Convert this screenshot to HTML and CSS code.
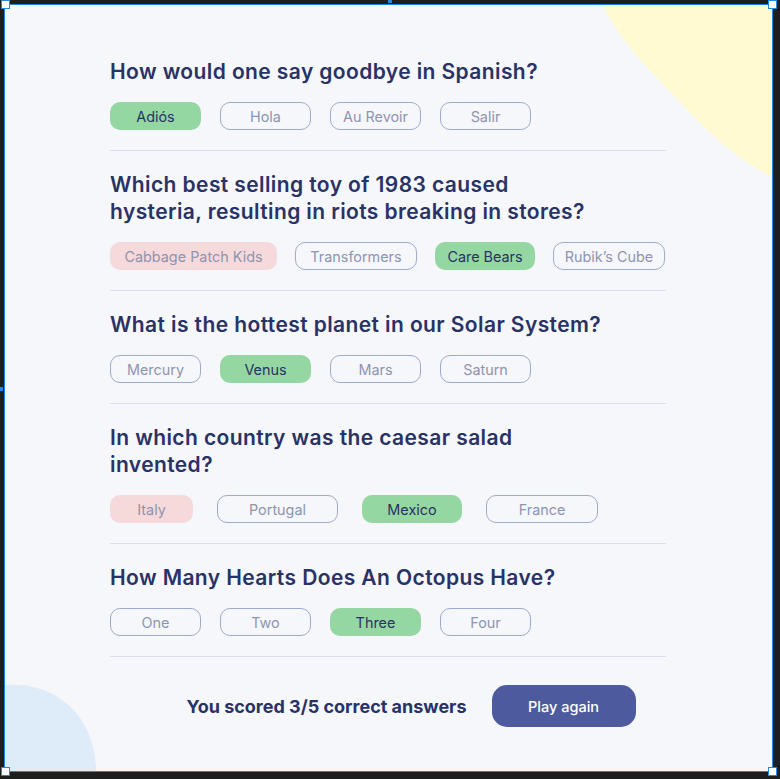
FILE: index.html
```html
<!DOCTYPE html>
<html lang="en">
<head>
<meta charset="utf-8">
<title>Quizzical</title>
<link rel="stylesheet" href="styles.css">
</head>
<body>
<div class="frame">
  <span class="handle handle-tl"></span>
  <span class="handle handle-tr"></span>
  <span class="handle handle-bl"></span>
  <span class="handle handle-br"></span>
  <span class="tick tick-top"></span>
  <span class="tick tick-left"></span>
  <main class="app">
    <svg class="blob blob-yellow" width="170" height="175" viewBox="597 0 170 175" aria-hidden="true">
      <path d="M598 0 C612 32 640 60 670 92 C702 126 728 152 767 172 L767 0 Z" fill="#fffad1"/>
    </svg>
    <svg class="blob blob-blue" width="95" height="90" viewBox="0 676 95 90" aria-hidden="true">
      <path d="M0 680 C48 676 90 708 91 766 L0 766 Z" fill="#deebf8"/>
    </svg>
    <div class="quiz">
      <section class="question">
        <h2 class="title">How would one say goodbye in Spanish?</h2>
        <div class="options opts-1">
          <span class="opt correct">Adiós</span>
          <span class="opt faded">Hola</span>
          <span class="opt faded">Au Revoir</span>
          <span class="opt faded">Salir</span>
        </div>
      </section>
      <section class="question">
        <h2 class="title">Which best selling toy of 1983 caused hysteria, resulting in riots breaking in stores?</h2>
        <div class="options opts-2">
          <span class="opt wrong">Cabbage Patch Kids</span>
          <span class="opt faded">Transformers</span>
          <span class="opt correct">Care Bears</span>
          <span class="opt faded">Rubik’s Cube</span>
        </div>
      </section>
      <section class="question">
        <h2 class="title">What is the hottest planet in our Solar System?</h2>
        <div class="options opts-1">
          <span class="opt faded">Mercury</span>
          <span class="opt correct">Venus</span>
          <span class="opt faded">Mars</span>
          <span class="opt faded">Saturn</span>
        </div>
      </section>
      <section class="question">
        <h2 class="title">In which country was the caesar salad invented?</h2>
        <div class="options opts-4">
          <span class="opt wrong">Italy</span>
          <span class="opt faded">Portugal</span>
          <span class="opt correct">Mexico</span>
          <span class="opt faded">France</span>
        </div>
      </section>
      <section class="question">
        <h2 class="title">How Many Hearts Does An Octopus Have?</h2>
        <div class="options opts-1">
          <span class="opt faded">One</span>
          <span class="opt faded">Two</span>
          <span class="opt correct">Three</span>
          <span class="opt faded">Four</span>
        </div>
      </section>
      <footer class="result">
        <p class="score">You scored 3/5 correct answers</p>
        <button class="play" type="button">Play again</button>
      </footer>
    </div>
  </main>
</div>
</body>
</html>
```
FILE: styles.css
```css
html {
  background: #1e1e1e;
}
body {
  margin: 0;
  padding: 4px;
  background: #1e1e1e;
}
.frame {
  position: relative;
  width: 767px;
  height: 766px;
  border: 1px solid #1f88e0;
}
.handle {
  position: absolute;
  width: 7px;
  height: 7px;
  background: #ffffff;
  border: 1px solid #1f88e0;
  z-index: 3;
}
.handle-tl { left: -4px; top: -5px; }
.handle-tr { right: -5px; top: -5px; }
.handle-bl { left: -4px; bottom: -5px; }
.handle-br { right: -5px; bottom: -5px; }
.tick {
  position: absolute;
  background: #1f88e0;
  z-index: 3;
}
.tick-top { left: 383px; top: -5px; width: 4px; height: 3px; }
.tick-left { top: 382px; left: -5px; width: 3px; height: 4px; }

.app {
  position: relative;
  width: 767px;
  height: 766px;
  overflow: hidden;
  background: #f5f7fb;
  font-family: Inter, "Liberation Sans", sans-serif;
  color: #293264;
}
.blob {
  position: absolute;
  display: block;
}
.blob-yellow { right: 0; top: 0; }
.blob-blue { left: 0; bottom: 0; }

.quiz {
  position: relative;
  width: 556px;
  margin: 0 0 0 105px;
  padding-top: 53px;
}
.question {
  padding: 20px 0;
  border-bottom: 1.5px solid #dbdef0;
}
.question:first-child {
  padding-top: 0;
}
.title {
  margin: 0 0 17px;
  max-width: 492px;
  font-size: 21px;
  line-height: 27px;
  font-weight: 600;
  letter-spacing: 0.4px;
  color: #293264;
}
.options {
  display: grid;
  height: 28px;
}
.opts-1 {
  grid-template-columns: repeat(4, 91px);
  column-gap: 19px;
}
.opts-2 {
  grid-template-columns: 167px 122px 100px 112px;
  column-gap: 18px;
}
.opts-4 {
  grid-template-columns: 83px 121px 100px 112px;
  column-gap: 24px;
}
.opt {
  display: flex;
  align-items: center;
  justify-content: center;
  box-sizing: border-box;
  height: 28px;
  border-radius: 10px;
  font-size: 14.4px;
  white-space: nowrap;
}
.correct {
  background: #94d7a2;
  color: #293264;
}
.wrong {
  background: #f6d9db;
  color: #8f94af;
}
.faded {
  border: 1px solid #a1a9cc;
  color: #8f94af;
}
.result {
  display: flex;
  align-items: center;
  justify-content: center;
  gap: 25px;
  padding: 28px 0 0 46px;
}
.score {
  margin: 0;
  font-size: 18px;
  font-weight: 700;
  color: #293264;
}
.play {
  width: 144px;
  height: 42px;
  border: none;
  border-radius: 15px;
  background: #4d5b9e;
  color: #ffffff;
  font-family: Inter, "Liberation Sans", sans-serif;
  font-size: 14.5px;
  font-weight: 500;
}
```
